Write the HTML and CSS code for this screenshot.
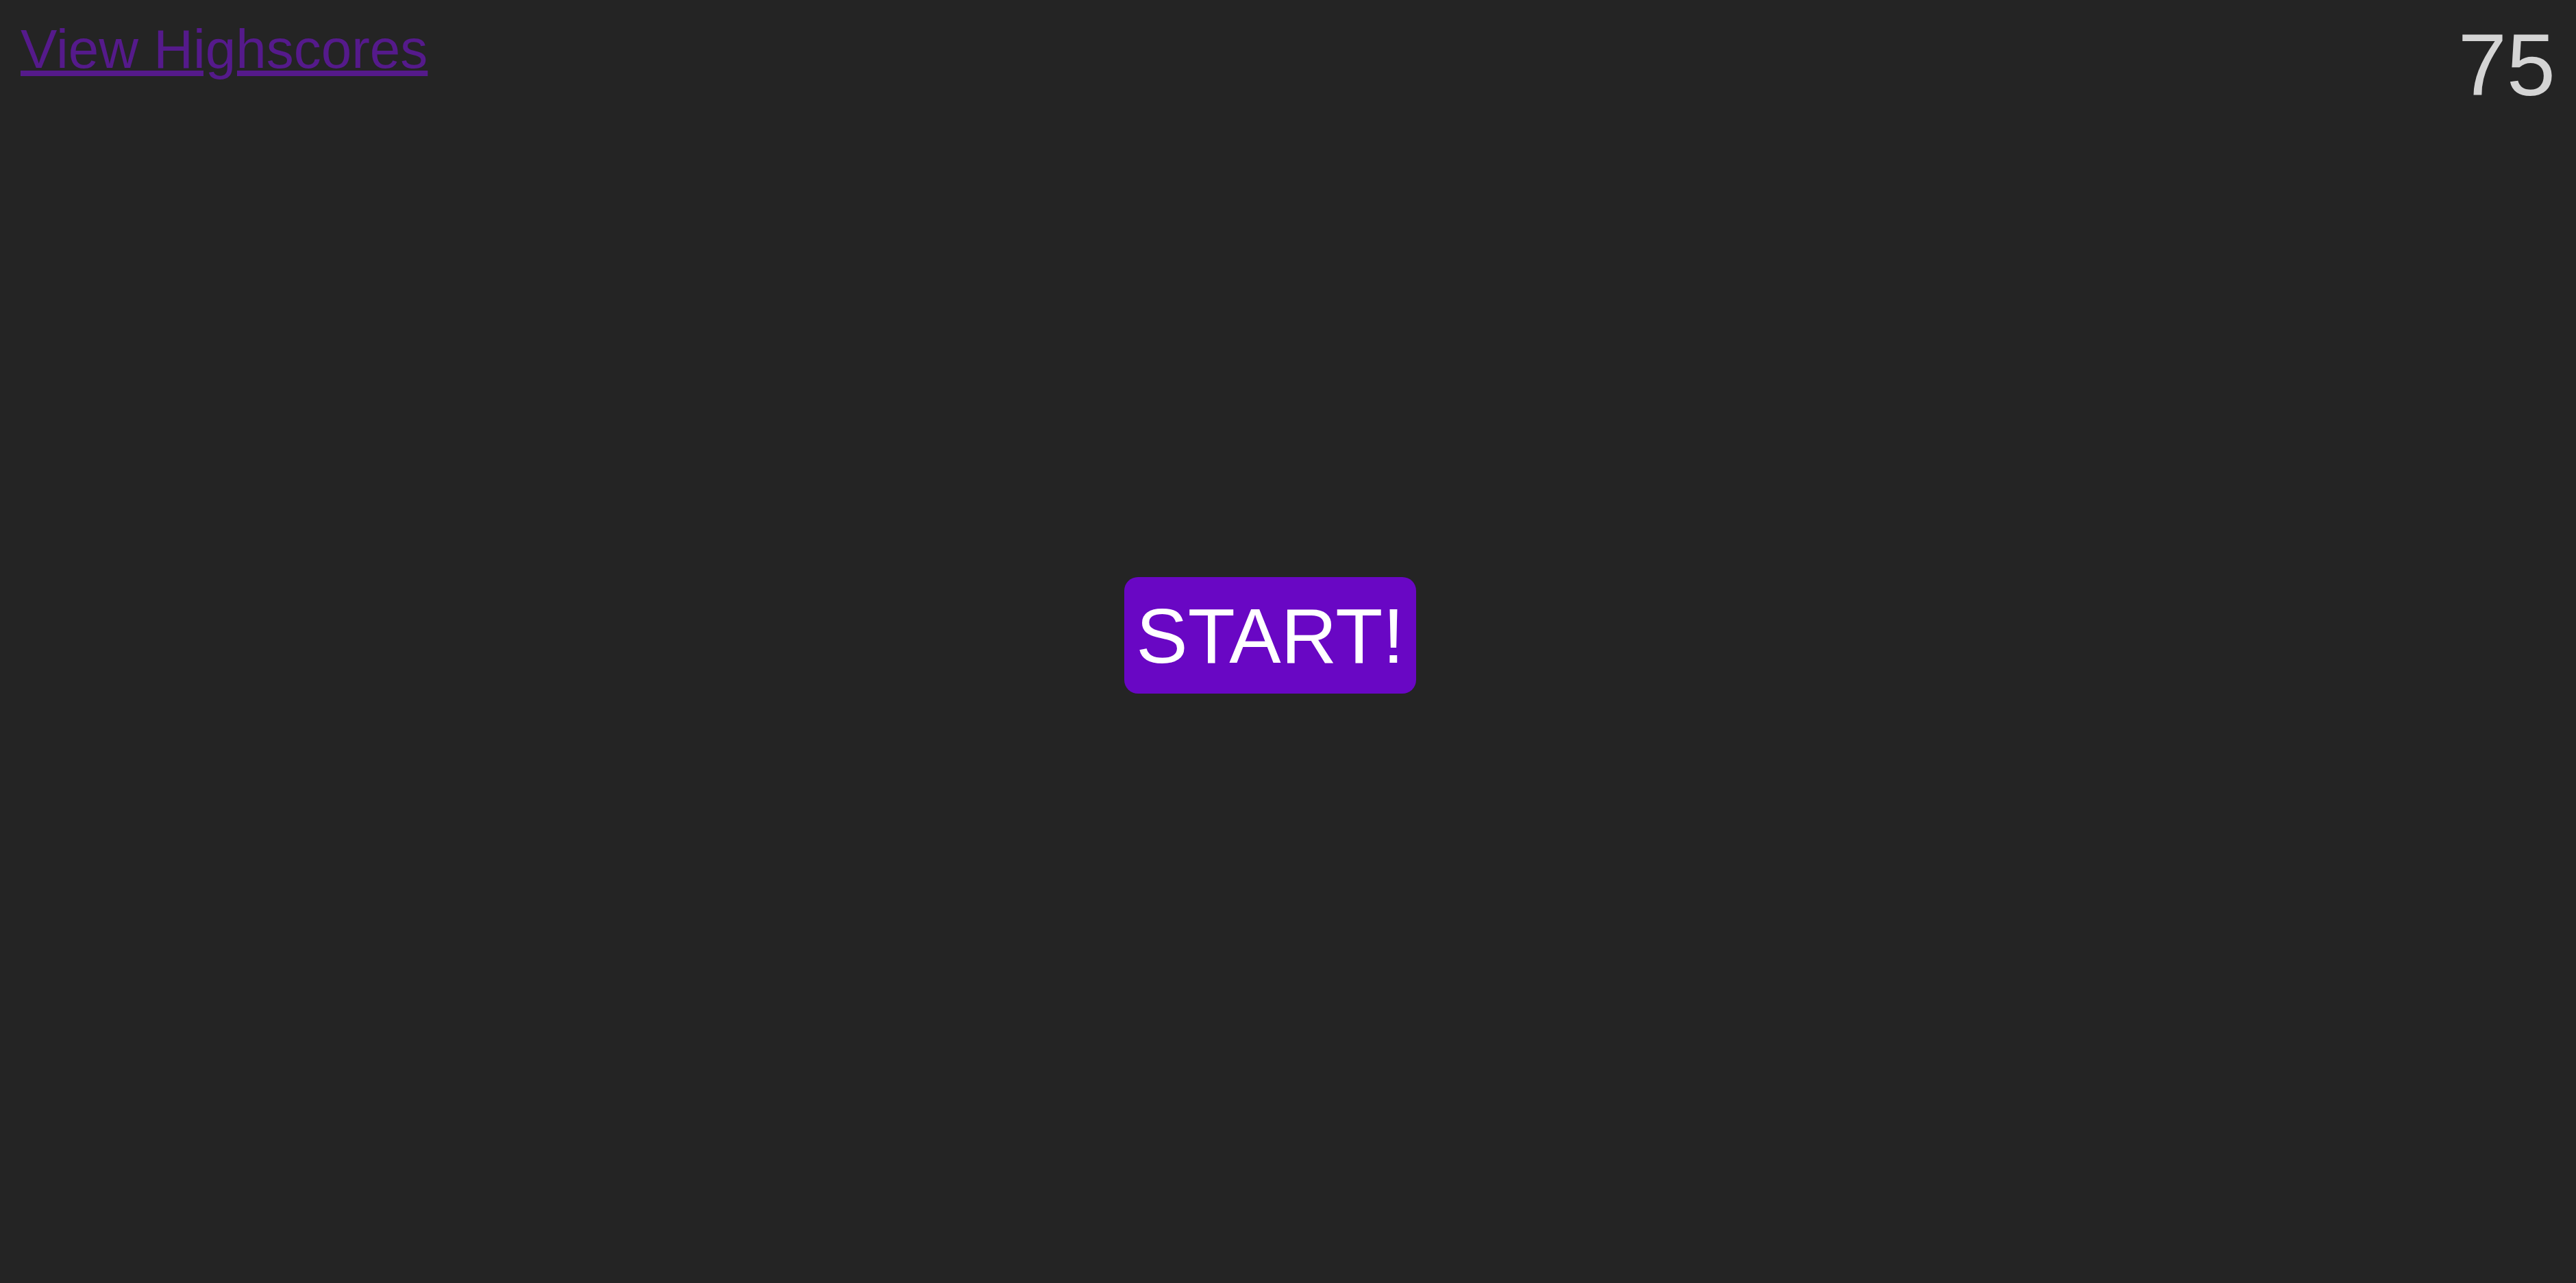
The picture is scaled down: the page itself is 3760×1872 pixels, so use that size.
FILE: index.html
```html
<!DOCTYPE html>
<html>
<head>
<meta charset="utf-8">
<link rel="stylesheet" href="styles.css">
</head>
<body>
<header class="top-bar">
  <a class="highscores-link" href="#">View Highscores</a>
  <div class="timer">75</div>
</header>
<main class="stage">
  <button class="start-btn">START!</button>
</main>
</body>
</html>
```
FILE: styles.css
```css
html, body {
  margin: 0;
  padding: 0;
  background: #242424;
  height: 100%;
}
body {
  font-family: "Liberation Sans", Arial, sans-serif;
}
.top-bar {
  display: flex;
  justify-content: space-between;
  align-items: flex-start;
  padding: 21px 30px 0 30px;
}
.highscores-link {
  margin-top: 5px;
  font-size: 80px;
  line-height: normal;
  color: #551a8b;
  text-decoration: underline;
  text-decoration-thickness: 8px;
  text-underline-offset: 4px;
}
.timer {
  font-size: 128px;
  line-height: normal;
  color: #d4d4d4;
}
.stage {
  display: flex;
  justify-content: center;
  padding-top: 674px;
  padding-right: 52px;
}
.start-btn {
  font-family: "Liberation Sans", Arial, sans-serif;
  font-size: 113px;
  line-height: normal;
  color: #ffffff;
  background: #6907c4;
  border: none;
  border-radius: 20px;
  padding: 21px 17px 19px 17px;
  margin: 0;
}
```
